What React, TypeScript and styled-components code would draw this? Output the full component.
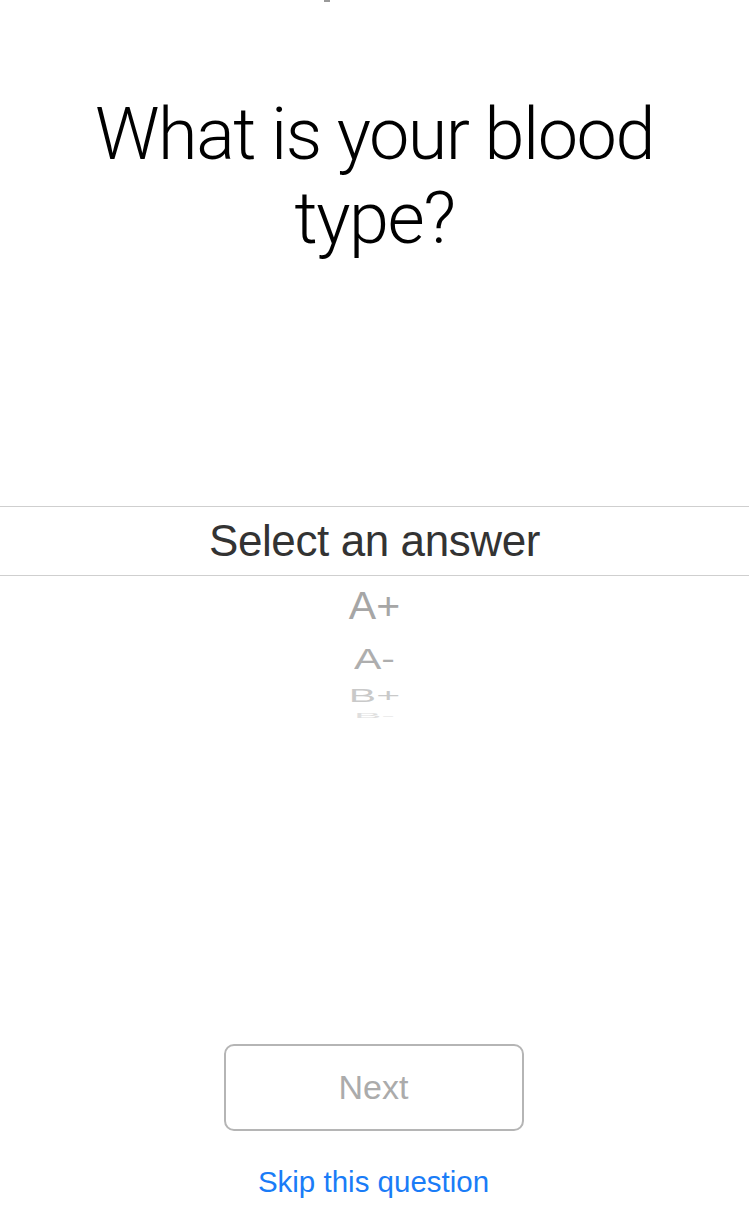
import React from "react";
import styled, { createGlobalStyle } from "styled-components";

const Global = createGlobalStyle`
  html, body { margin: 0; padding: 0; background: #fff; }
  body { font-family: "Liberation Sans", Arial, sans-serif; }
`;

const Page = styled.div`
  width: 749px;
  height: 1232px;
  display: flex;
  flex-direction: column;
  align-items: center;
  overflow: hidden;
`;

const TopMark = styled.div`
  width: 6px;
  height: 2px;
  background: #9a9a9a;
  margin-left: -95px;
  align-self: center;
`;

const Title = styled.h1`
  margin: 91px 0 0;
  width: 680px;
  text-align: center;
  font-family: "Roboto", "Liberation Sans", sans-serif;
  font-weight: 300;
  font-size: 72px;
  line-height: 84px;
  letter-spacing: -1.5px;
  color: #000;
`;

const Picker = styled.div`
  margin-top: 245px;
  width: 100%;
  display: flex;
  flex-direction: column;
  align-items: center;
`;

const Selected = styled.div`
  width: 100%;
  height: 68px;
  border-top: 1px solid #cfcfcf;
  border-bottom: 1px solid #cfcfcf;
  display: flex;
  align-items: center;
  justify-content: center;
  font-size: 44px;
  color: #333;
  font-family: "Liberation Sans", Arial, sans-serif;
  letter-spacing: -0.4px;
`;

const Option = styled.div<{ $scale: number; $opacity: number; $h: number }>`
  height: ${(p) => p.$h}px;
  display: flex;
  align-items: center;
  justify-content: center;
  font-size: 41px;
  color: #a6a6a6;
  opacity: ${(p) => p.$opacity};
  transform: scaleY(${(p) => p.$scale});
  font-family: "Liberation Sans", Arial, sans-serif;
`;

const Spacer = styled.div`
  flex: 1;
`;

const NextButton = styled.button`
  width: 300px;
  height: 87px;
  border: 2px solid #b5b5b5;
  border-radius: 10px;
  background: #fff;
  font-family: "Liberation Sans", Arial, sans-serif;
  font-size: 34px;
  color: #ababab;
  padding: 0;
  margin: 0 2px 34px 0;
`;

const SkipLink = styled.a`
  font-family: "Liberation Sans", Arial, sans-serif;
  font-size: 29.5px;
  color: #1a7cf7;
  text-decoration: none;
  margin: 0 2px 33px 0;
`;

const options = [
  { label: "A+", scale: 0.95, opacity: 1, h: 60 },
  { label: "A-", scale: 0.74, opacity: 0.9, h: 46 },
  { label: "B+", scale: 0.45, opacity: 0.6, h: 27 },
  { label: "B-", scale: 0.18, opacity: 0.35, h: 12 },
];

export default function App() {
  return (
    <>
      <Global />
      <Page>
        <TopMark />
        <Title>What is your blood type?</Title>
        <Picker>
          <Selected>Select an answer</Selected>
          {options.map((o) => (
            <Option key={o.label} $scale={o.scale} $opacity={o.opacity} $h={o.h}>
              {o.label}
            </Option>
          ))}
        </Picker>
        <Spacer />
        <NextButton>Next</NextButton>
        <SkipLink href="#">Skip this question</SkipLink>
      </Page>
    </>
  );
}
